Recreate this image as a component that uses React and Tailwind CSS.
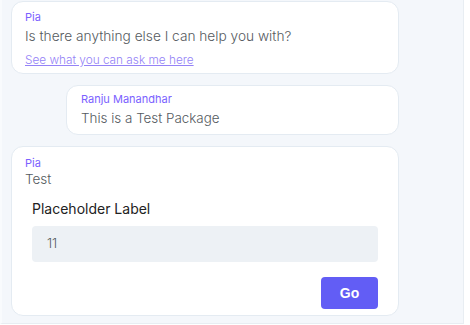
export default function App() {
  const font = { fontFamily: 'Inter, "Noto Sans", sans-serif' };
  return (
    <div className="w-[470px] h-[325px] bg-white overflow-hidden" style={font}>
      <div className="w-[464px] h-[324px] bg-[#f4f7fb] border-r border-b border-l-2 border-[#e8edf2] border-l-[#f9fbfd] pl-[9px] pt-px flex flex-col gap-[11px]">
        <div className="w-[388px] h-[73px] bg-white rounded-[12px] border border-[#e4ebf2] pl-[13px] pt-[8px]">
          <div className="text-[11px] leading-[14px] text-[#7b61ff]">Pia</div>
          <div className="text-[13.7px] leading-[20px] mt-[2px] text-[#555a60] font-light">Is there anything else I can help you with?</div>
          <div className="text-[11.8px] leading-[14px] mt-[7px] text-[#9583f7] underline font-light">See what you can ask me here</div>
        </div>
        <div className="ml-[55px] w-[333px] h-[50px] bg-white rounded-[12px] border border-[#e4ebf2] pl-[14px] pt-[6px]">
          <div className="text-[11px] leading-[14px] text-[#7b61ff]">Ranju Manandhar</div>
          <div className="text-[13.4px] leading-[20px] mt-[2px] text-[#555a60] font-light">This is a Test Package</div>
        </div>
        <div className="w-[388px] h-[170px] bg-white rounded-[12px] border border-[#e4ebf2] pl-[13px] pt-[9px]">
          <div className="text-[11px] leading-[14px] text-[#7b61ff]">Pia</div>
          <div className="text-[13.5px] leading-[18px] text-[#555a60] font-light">Test</div>
          <div className="pl-[7px] pr-[20px] mt-[11px]">
            <div className="text-[14px] leading-[20px] text-[#222]">Placeholder Label</div>
            <div className="mt-[7px] h-[36px] bg-[#edf1f5] rounded-[4px] flex items-center pl-[15px] text-[13px] text-[#555a60] font-light">11</div>
            <div className="flex justify-end mt-[15px]">
              <button className="w-[57px] h-[32px] bg-[#625df5] rounded-[4px] text-white font-bold text-[14px]" style={{ fontFamily: '"Liberation Sans", Arial, sans-serif' }}>Go</button>
            </div>
          </div>
        </div>
      </div>
    </div>
  );
}
